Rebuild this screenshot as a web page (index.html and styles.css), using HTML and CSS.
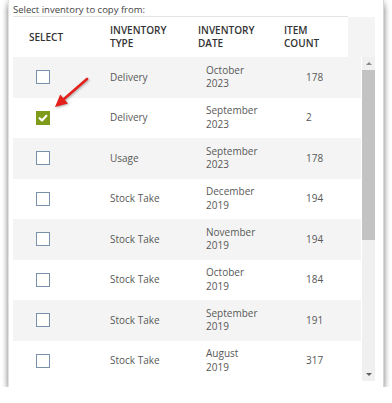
FILE: index.html
```html
<!DOCTYPE html>
<html lang="en">
<head>
    <meta charset="UTF-8">
    <meta name="viewport" content="width=device-width, initial-scale=1.0">
    <title>Copy Inventory</title>
    <link rel="stylesheet" href="styles.css">
</head>
<body>
    <div class="panel">
        <p class="caption">Select inventory to copy from:</p>

        <div class="grid-head">
            <div class="head-row">
                <div class="head-cell head-select">SELECT</div>
                <div class="head-cell">INVENTORY<br>TYPE</div>
                <div class="head-cell">INVENTORY<br>DATE</div>
                <div class="head-cell">ITEM<br>COUNT</div>
            </div>
            <div class="head-filler"></div>
        </div>

        <div class="grid-body">
            <div class="rows">
                <div class="row">
                    <div class="cell cell-check"><span class="checkbox"></span></div>
                    <div class="cell">Delivery</div>
                    <div class="cell">October<br>2023</div>
                    <div class="cell">178</div>
                </div>
                <div class="row">
                    <div class="cell cell-check">
                        <span class="checkbox checked">
                            <svg viewBox="0 0 14 14" width="14" height="14"><path d="M3.6 7.2 L6 9.4 L10.4 4.8" fill="none" stroke="#fff" stroke-width="2.2" stroke-linecap="round" stroke-linejoin="round"/></svg>
                        </span>
                    </div>
                    <div class="cell">Delivery</div>
                    <div class="cell">September<br>2023</div>
                    <div class="cell">2</div>
                </div>
                <div class="row">
                    <div class="cell cell-check"><span class="checkbox"></span></div>
                    <div class="cell">Usage</div>
                    <div class="cell">September<br>2023</div>
                    <div class="cell">178</div>
                </div>
                <div class="row">
                    <div class="cell cell-check"><span class="checkbox"></span></div>
                    <div class="cell">Stock Take</div>
                    <div class="cell">December<br>2019</div>
                    <div class="cell">194</div>
                </div>
                <div class="row">
                    <div class="cell cell-check"><span class="checkbox"></span></div>
                    <div class="cell">Stock Take</div>
                    <div class="cell">November<br>2019</div>
                    <div class="cell">194</div>
                </div>
                <div class="row">
                    <div class="cell cell-check"><span class="checkbox"></span></div>
                    <div class="cell">Stock Take</div>
                    <div class="cell">October<br>2019</div>
                    <div class="cell">184</div>
                </div>
                <div class="row">
                    <div class="cell cell-check"><span class="checkbox"></span></div>
                    <div class="cell">Stock Take</div>
                    <div class="cell">September<br>2019</div>
                    <div class="cell">191</div>
                </div>
                <div class="row">
                    <div class="cell cell-check"><span class="checkbox"></span></div>
                    <div class="cell">Stock Take</div>
                    <div class="cell">August<br>2019</div>
                    <div class="cell">317</div>
                </div>
            </div>

            <div class="scrollbar">
                <div class="scroll-btn"><span class="tri-up"></span></div>
                <div class="scroll-thumb"></div>
                <div class="scroll-track"></div>
                <div class="scroll-btn"><span class="tri-down"></span></div>
            </div>
        </div>

        <svg class="arrow" width="40" height="40" viewBox="0 0 40 40">
            <line x1="35" y1="5" x2="12" y2="25" stroke="#e3201b" stroke-width="2.6" stroke-linecap="round"/>
            <polygon points="3,33 16,29.5 8.2,20.5" fill="#e3201b"/>
        </svg>
    </div>
</body>
</html>
```

FILE: styles.css
```css
* {
    margin: 0;
    padding: 0;
    box-sizing: border-box;
}

body {
    font-family: 'Open Sans', 'Segoe UI', sans-serif;
    background: #ffffff;
    color: #585858;
    font-size: 10px;
}

.panel {
    position: relative;
    width: 376px;
    height: 387px;
    margin: 0 8px;
    padding: 0 8px 6px 4px;
    background: #ffffff;
    border-left: 1px solid #e2e2e2;
    border-right: 1px solid #d6d6d6;
    box-shadow: 0 0 6px rgba(0, 0, 0, 0.22), 0 6px 6px rgba(0, 0, 0, 0.38);
    display: flex;
    flex-direction: column;
}

.caption {
    padding-top: 3px;
    font-size: 9.5px;
    line-height: 13px;
    color: #444444;
    border-bottom: 1px solid #e4e4e4;
    width: 335px;
}

.grid-head {
    display: flex;
    height: 40px;
}

.head-row {
    width: 335px;
    display: grid;
    grid-template-columns: 97px 88px 86px 1fr;
    background: #ffffff;
}

.head-filler {
    flex: 1;
    background: #f4f4f4;
}

.head-cell {
    display: flex;
    align-items: center;
    font-weight: 600;
    font-size: 10px;
    line-height: 13px;
    color: #333333;
}

.head-select {
    padding-left: 16px;
}

.grid-body {
    display: flex;
    height: 324px;
    overflow: hidden;
}

.rows {
    flex: 1;
    display: grid;
    grid-auto-rows: 40.5px;
}

.row {
    display: grid;
    grid-template-columns: 97px 96px 100px 1fr;
}

.row:nth-child(odd) {
    background: #f4f4f4;
}

.cell {
    display: flex;
    align-items: center;
    line-height: 13.5px;
}

.cell-check {
    padding-left: 23px;
}

.checkbox {
    width: 14px;
    height: 14px;
    border: 1.5px solid #7891aa;
    background: #ffffff;
    display: flex;
    align-items: center;
    justify-content: center;
}

.checkbox.checked {
    border: none;
    background: #7e9c1a;
}

.scrollbar {
    width: 13px;
    margin-left: 1px;
    background: #f0f0f0;
    display: flex;
    flex-direction: column;
}

.scroll-btn {
    height: 13px;
    display: flex;
    align-items: center;
    justify-content: center;
}

.scroll-thumb {
    height: 170px;
    background: #c3c3c3;
}

.scroll-track {
    flex: 1;
}

.tri-up {
    border-left: 3px solid transparent;
    border-right: 3px solid transparent;
    border-bottom: 3px solid #8a8a8a;
}

.tri-down {
    border-left: 3px solid transparent;
    border-right: 3px solid transparent;
    border-top: 3px solid #606060;
}

.arrow {
    position: absolute;
    left: 43px;
    top: 74px;
    filter: drop-shadow(1px 1px 1px rgba(0, 0, 0, 0.3));
}
```
